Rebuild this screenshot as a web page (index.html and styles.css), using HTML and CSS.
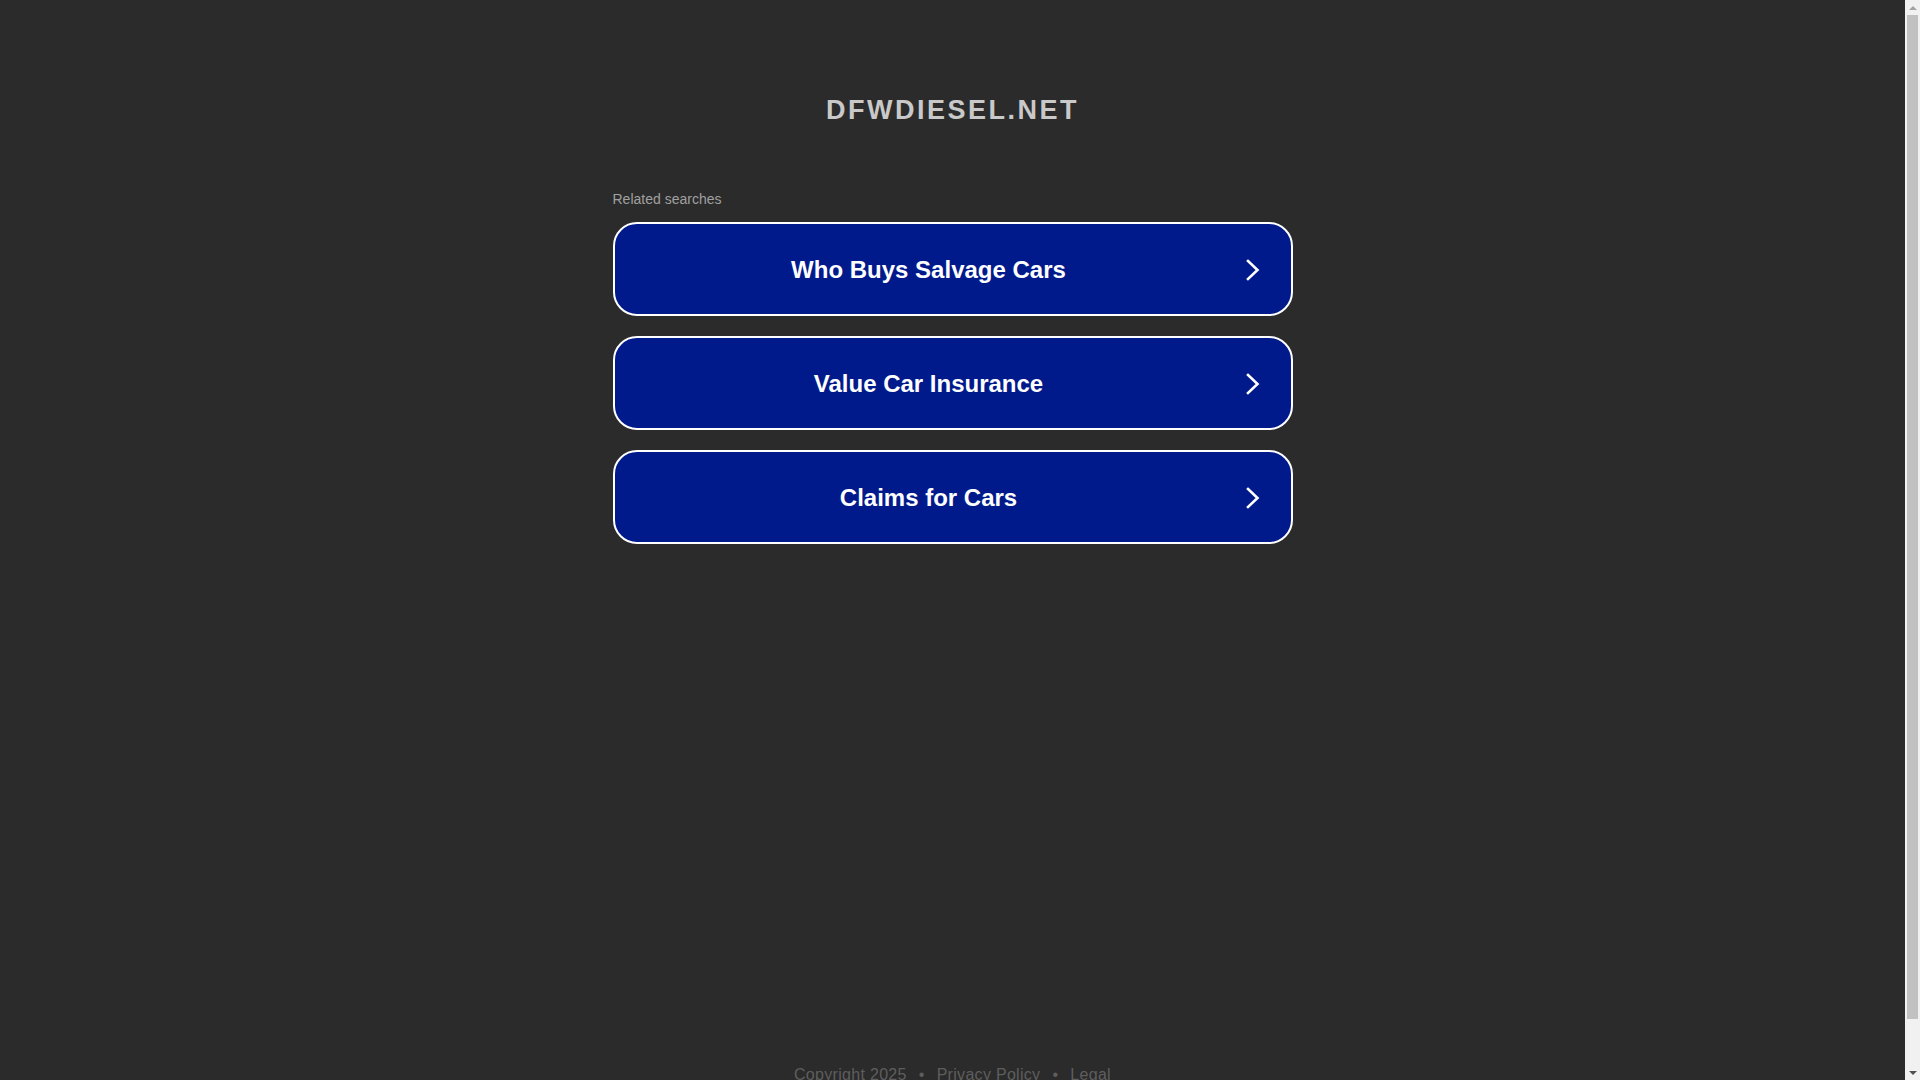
FILE: index.html
```html
<!DOCTYPE html>
<html lang="en">
<head>
<meta charset="utf-8">
<title>dfwdiesel.net</title>
<link rel="stylesheet" href="styles.css">
</head>
<body>
<div class="page">
  <header class="header">
    <h1 class="domain">DFWDIESEL.NET</h1>
  </header>
  <main class="content">
    <div class="related-label">Related searches</div>
    <div class="links">
      <a class="link-btn" href="#"><span class="link-text">Who Buys Salvage Cars</span><svg class="chev" viewBox="0 0 14 22" width="14" height="22"><path d="M2 2 L11.5 11 L2 20" fill="none" stroke="#fff" stroke-width="2.6" stroke-linecap="square"/></svg></a>
      <a class="link-btn" href="#"><span class="link-text">Value Car Insurance</span><svg class="chev" viewBox="0 0 14 22" width="14" height="22"><path d="M2 2 L11.5 11 L2 20" fill="none" stroke="#fff" stroke-width="2.6" stroke-linecap="square"/></svg></a>
      <a class="link-btn" href="#"><span class="link-text">Claims for Cars</span><svg class="chev" viewBox="0 0 14 22" width="14" height="22"><path d="M2 2 L11.5 11 L2 20" fill="none" stroke="#fff" stroke-width="2.6" stroke-linecap="square"/></svg></a>
    </div>
  </main>
  <footer class="footer">
    <span class="foot-item">Copyright 2025</span><span class="dot">&bull;</span><a class="foot-item" href="#">Privacy Policy</a><span class="dot">&bull;</span><a class="foot-item" href="#">Legal</a>
  </footer>
</div>
<div class="fake-scrollbar" aria-hidden="true">
  <div class="sb-arrow sb-up"></div>
  <div class="sb-track"><div class="sb-thumb"></div></div>
  <div class="sb-arrow sb-down"></div>
</div>
</body>
</html>
```
FILE: styles.css
```css
html, body {
  margin: 0;
  padding: 0;
  background: #2b2b2b;
}
body {
  font-family: "Liberation Sans", Arial, sans-serif;
  padding-right: 15px;
}
.page {
  display: flex;
  flex-direction: column;
  align-items: center;
}
.header {
  padding-top: 94px;
}
.domain {
  margin: 0;
  font-size: 27px;
  line-height: 32px;
  font-weight: bold;
  letter-spacing: 2.5px;
  color: #c9c9c9;
  text-align: center;
}
.content {
  width: 680px;
  margin-top: 64px;
}
.related-label {
  font-size: 14px;
  line-height: 18px;
  color: #a0a0a0;
  margin-bottom: 14px;
}
.links {
  display: flex;
  flex-direction: column;
  gap: 20px;
}
.link-btn {
  box-sizing: border-box;
  height: 94px;
  display: flex;
  align-items: center;
  padding: 2px 31px 0 20px;
  background: #011a8b;
  border: 2px solid #ffffff;
  border-radius: 24px;
  text-decoration: none;
  color: #ffffff;
}
.link-text {
  flex: 1;
  text-align: center;
  font-size: 24px;
  font-weight: bold;
  line-height: 28px;
  margin-right: 23px;
}
.chev {
  display: block;
  flex: none;
}
.footer {
  margin-top: 521px;
  padding-bottom: 43px;
  font-size: 16px;
  line-height: 20px;
  color: #5e5e5e;
  letter-spacing: 0.3px;
}
.foot-item {
  color: #5e5e5e;
  text-decoration: none;
}
.dot {
  margin: 0 12px;
}

/* overlay imitation of the browser's scrollbar */
.fake-scrollbar {
  position: fixed;
  top: 0;
  right: 0;
  width: 15px;
  height: 100vh;
  background: #f1f1f1;
  display: flex;
  flex-direction: column;
}
.sb-arrow {
  height: 15px;
  flex: none;
  display: flex;
  align-items: center;
  justify-content: center;
}
.sb-up::before,
.sb-down::before {
  content: "";
  width: 0;
  height: 0;
  border-left: 4px solid transparent;
  border-right: 4px solid transparent;
}
.sb-up::before {
  border-bottom: 4px solid #a3a3a3;
}
.sb-down::before {
  border-top: 4px solid #505050;
}
.sb-track {
  flex: 1;
  padding: 0 2px;
}
.sb-thumb {
  height: 1004px;
  background: #c1c1c1;
}
```
